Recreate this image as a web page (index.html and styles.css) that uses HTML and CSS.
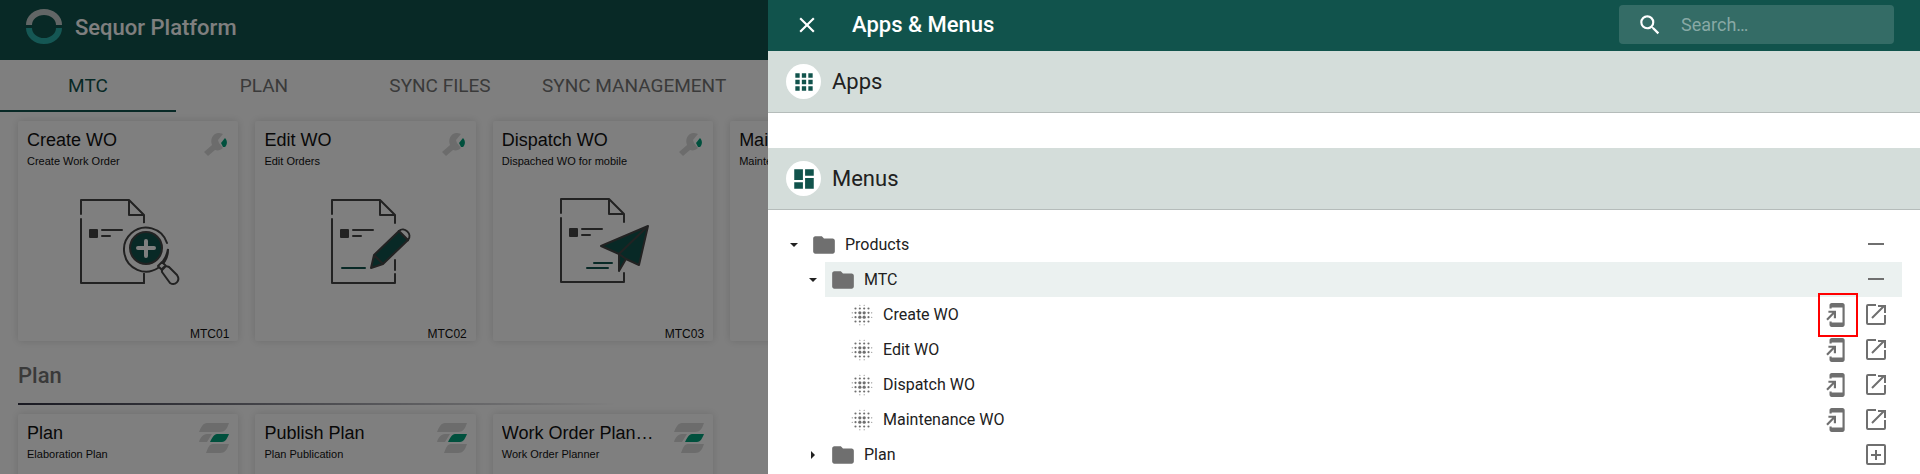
FILE: index.html
```html
<!DOCTYPE html>
<html lang="en">
<head>
    <meta charset="UTF-8">
    <meta name="viewport" content="width=device-width, initial-scale=1.0">
    <title>Sequor Platform</title>
    <link rel="stylesheet" href="styles.css">
</head>
<body>
    <!-- Shared icons -->
    <svg class="sprite" aria-hidden="true">
        <symbol id="folder" viewBox="0 0 24 24"><path d="M10 4H4c-1.100 0-2 .9-2 2v12c0 1.100.9 2 2 2h16c1.100 0 2-.9 2-2V8c0-1.100-.9-2-2-2h-8z"/></symbol>
        <symbol id="blur" viewBox="0 0 24 24">
            <circle cx="10" cy="10" r="1.500"/><circle cx="14" cy="10" r="1.500"/><circle cx="10" cy="14" r="1.500"/><circle cx="14" cy="14" r="1.500"/>
            <circle cx="6" cy="6" r="1"/><circle cx="10" cy="6" r="1"/><circle cx="14" cy="6" r="1"/><circle cx="18" cy="6" r="1"/>
            <circle cx="6" cy="18" r="1"/><circle cx="10" cy="18" r="1"/><circle cx="14" cy="18" r="1"/><circle cx="18" cy="18" r="1"/>
            <circle cx="6" cy="10" r="1"/><circle cx="6" cy="14" r="1"/><circle cx="18" cy="10" r="1"/><circle cx="18" cy="14" r="1"/>
            <circle cx="3" cy="10" r=".5"/><circle cx="3" cy="14" r=".5"/><circle cx="21" cy="10" r=".5"/><circle cx="21" cy="14" r=".5"/>
            <circle cx="10" cy="3" r=".5"/><circle cx="14" cy="3" r=".5"/><circle cx="10" cy="21" r=".5"/><circle cx="14" cy="21" r=".5"/>
        </symbol>
        <symbol id="to-home" viewBox="0 0 24 24"><path d="M18 1H8c-1.100 0-2 .9-2 2v3h2V5h10v14H8v-1H6v3c0 1.100.9 2 2 2h10c1.100 0 2-.9 2-2V3c0-1.100-.9-2-2-2zM10 15h2V8H5v2h3.590L3 15.590 4.410 17 10 11.410z"/></symbol>
        <symbol id="open" viewBox="0 1 26 26"><path fill="none" stroke="currentColor" stroke-width="2" d="M13 4H5a1 1 0 0 0-1 1v17a1 1 0 0 0 1 1h16a1 1 0 0 0 1-1v-8M15 5h7v7M9 17 21 5"/></symbol>
        <symbol id="minus" viewBox="0 1 26 26"><path d="M5 12h16v2H5z"/></symbol>
        <symbol id="plus-box" viewBox="0 1 26 26"><path fill="none" stroke="currentColor" stroke-width="2" d="M5 4h16a1 1 0 0 1 1 1v17a1 1 0 0 1-1 1H5a1 1 0 0 1-1-1V5a1 1 0 0 1 1-1zM8 14h10M13 9v10"/></symbol>
        <symbol id="wrench" viewBox="0 0 30 30">
            <path fill="#d9d9d9" d="M5 22 13 15C11 10 13 4 19 3c2 0 3 0 5 1l-5 6 1 3 4 5c-2 2-5 3-8 2l-7 6z"/>
            <path fill="#00a07a" d="M22 13l4-5c3 3 2 7 0 9h-2z"/>
        </symbol>
        <symbol id="planner" viewBox="0 0 30 30">
            <path fill="#d9d9d9" d="M8 0h22c-2 6-4 9-9 9H0c2-5 4-9 8-9zM8 11h5l-5 8H0c1-4 4-8 8-8zM14 21h16c-2 6-4 9-9 9H7c2-5 3-9 7-9z"/>
            <path fill="#00a07a" d="M18 11h12c-2 5-4 8-7 8H11c2-4 4-8 7-8z"/>
        </symbol>
        <symbol id="document" viewBox="0 0 66 88" overflow="visible">
            <path fill="none" stroke="#444" stroke-width="2" stroke-linejoin="round" stroke-linecap="round" d="M1 15V1h48l15 15v8M49 1v15h15M1 20v64h63v-9"/>
            <path fill="#444" d="M10 30h7q1 0 1 1v7q0 1-1 1h-7q-1 0-1-1v-7q0-1 1-1z"/>
            <path fill="none" stroke="#444" stroke-width="2" stroke-linecap="round" d="M22 31h20M22 37h8"/>
        </symbol>
    </svg>

    <div class="page">
        <header class="topbar">
            <svg class="logo" viewBox="0 0 36 36">
                <path fill="none" stroke="#c5cdcc" stroke-width="6" d="M3 16a15 13 0 0 1 30 0"/>
                <path fill="none" stroke="#2aaea9" stroke-width="6" d="M3 19a15 13 0 0 0 30 0"/>
            </svg>
            <h1>Sequor Platform</h1>
        </header>

        <nav class="tabs">
            <button class="tab active">MTC</button>
            <button class="tab">PLAN</button>
            <button class="tab">SYNC FILES</button>
            <button class="tab">SYNC MANAGEMENT</button>
            <button class="tab">MONITORING</button>
        </nav>

        <div class="cards">
            <a class="card" href="#mtc01">
                <div class="card-head">
                    <h3>Create WO</h3>
                    <svg class="card-icon"><use href="#wrench"/></svg>
                </div>
                <p>Create Work Order</p>
                <svg class="picture" viewBox="0 0 120 100">
                    <use href="#document" x="12" y="7" width="66" height="88"/>
                    <circle cx="78" cy="56" r="25" fill="#fff"/>
                    <path fill="none" stroke="#444" stroke-width="2" stroke-linecap="round" d="M76 82v9"/>
                    <path fill="none" stroke="#444" stroke-width="2" stroke-linecap="round" d="M99 51a22 22 0 1 0 1 6q-1 7-5 12"/>
                    <circle cx="78" cy="56" r="16" fill="#11534c" stroke="#444" stroke-width="2"/>
                    <path stroke="#fff" stroke-width="4" stroke-linecap="round" d="M78 49v15M70 56h16"/>
                    <path fill="#fff" stroke="#444" stroke-width="2" stroke-linejoin="round" d="M90 74l4-4 4 4-4 4zM94 80c-1-4 3-7 7-5l8 8c4 6-2 11-7 8z"/>
                </svg>
                <span class="code">MTC01</span>
            </a>
            <a class="card" href="#mtc02">
                <div class="card-head">
                    <h3>Edit WO</h3>
                    <svg class="card-icon"><use href="#wrench"/></svg>
                </div>
                <p>Edit Orders</p>
                <svg class="picture" viewBox="0 0 120 100">
                    <use href="#document" x="25" y="7" width="66" height="88"/>
                    <path stroke="#11534c" stroke-width="2" stroke-linecap="round" d="M36 76h23"/>
                    <path stroke="#fff" stroke-width="5" d="M89 40v26"/>
                    <path stroke="#444" stroke-width="2" stroke-linecap="round" d="M89 68v10"/>
                    <path fill="#11534c" stroke="#444" stroke-width="2" stroke-linejoin="round" d="M65 76l3-13 25-24 9 9-25 24zM68 63l9 9"/>
                    <path fill="#fff" stroke="#444" stroke-width="2" d="M93 39c5-5 14 3 9 9z"/>
                </svg>
                <span class="code">MTC02</span>
            </a>
            <a class="card" href="#mtc03">
                <div class="card-head">
                    <h3>Dispatch WO</h3>
                    <svg class="card-icon"><use href="#wrench"/></svg>
                </div>
                <p>Dispached WO for mobile</p>
                <svg class="picture" viewBox="0 0 120 100">
                    <use href="#document" x="17" y="6" width="66" height="88"/>
                    <path stroke="#11534c" stroke-width="2" stroke-linecap="round" d="M51 71h18M44 76h21"/>
                    <path fill="#11534c" stroke="#444" stroke-width="2" stroke-linejoin="round" d="M58 54l47-20-9 39-13-6-7 12V62zM76 62l29-28M76 62l7 5"/>
                </svg>
                <span class="code">MTC03</span>
            </a>
            <a class="card" href="#mtc04">
                <div class="card-head">
                    <h3>Maintenance WO</h3>
                    <svg class="card-icon"><use href="#wrench"/></svg>
                </div>
                <p>Maintenance Orders</p>
                <span class="code">MTC04</span>
            </a>
        </div>

        <h2 class="section-title">Plan</h2>

        <div class="cards">
            <a class="card" href="#plan01">
                <div class="card-head">
                    <h3>Plan</h3>
                    <svg class="card-icon"><use href="#planner"/></svg>
                </div>
                <p>Elaboration Plan</p>
            </a>
            <a class="card" href="#plan02">
                <div class="card-head">
                    <h3>Publish Plan</h3>
                    <svg class="card-icon"><use href="#planner"/></svg>
                </div>
                <p>Plan Publication</p>
            </a>
            <a class="card" href="#plan03">
                <div class="card-head">
                    <h3>Work Order Planner</h3>
                    <svg class="card-icon"><use href="#planner"/></svg>
                </div>
                <p>Work Order Planner</p>
            </a>
        </div>
    </div>

    <div class="backdrop"></div>

    <aside class="drawer">
        <div class="drawer-header">
            <button class="icon-button close" aria-label="Close">
                <svg class="icon" viewBox="0 0 24 24"><path d="M19 6.410 17.590 5 12 10.590 6.410 5 5 6.410 10.590 12 5 17.590 6.410 19 12 13.410 17.590 19 19 17.590 13.410 12z"/></svg>
            </button>
            <h2>Apps &amp; Menus</h2>
            <label class="search">
                <svg class="icon" viewBox="0 0 24 24"><path d="M15.500 14h-.79l-.28-.27A6.470 6.470 0 0 0 16 9.500 6.500 6.500 0 1 0 9.500 16c1.610 0 3.090-.59 4.230-1.570l.27.28v.79l5 4.990L20.490 19zm-6 0C7.010 14 5 11.990 5 9.500S7.010 5 9.500 5 14 7.010 14 9.500 11.990 14 9.500 14z"/></svg>
                <input type="text" placeholder="Search…" aria-label="Search">
            </label>
        </div>

        <div class="band">
            <span class="band-icon">
                <svg class="icon" viewBox="0 0 24 24"><path d="M4 8h4V4H4zm6 12h4v-4h-4zm-6 0h4v-4H4zm0-6h4v-4H4zm6 0h4v-4h-4zm6-10v4h4V4zm-6 4h4V4h-4zm6 6h4v-4h-4zm0 6h4v-4h-4z"/></svg>
            </span>
            <h3>Apps</h3>
        </div>
        <div class="apps"></div>
        <div class="band">
            <span class="band-icon">
                <svg class="icon" viewBox="0 0 24 24"><path d="M3 13h8V3H3zm0 8h8v-6H3zm10 0h8V11h-8zm0-18v6h8V3z"/></svg>
            </span>
            <h3>Menus</h3>
        </div>

        <ul class="tree">
            <li>
                <div class="row">
                    <button class="caret open" aria-label="Collapse Products"></button>
                    <div class="node">
                        <svg class="icon"><use href="#folder"/></svg>
                        <span class="label">Products</span>
                        <button class="icon-button" aria-label="Collapse"><svg class="icon"><use href="#minus"/></svg></button>
                    </div>
                </div>
                <ul>
                    <li>
                        <div class="row">
                            <button class="caret open" aria-label="Collapse MTC"></button>
                            <div class="node selected">
                                <svg class="icon"><use href="#folder"/></svg>
                                <span class="label">MTC</span>
                                <button class="icon-button" aria-label="Collapse"><svg class="icon"><use href="#minus"/></svg></button>
                            </div>
                        </div>
                        <ul>
                            <li class="row">
                                <div class="node">
                                    <svg class="icon"><use href="#blur"/></svg>
                                    <span class="label">Create WO</span>
                                    <button class="icon-button home marked" aria-label="Add to home"><svg class="icon"><use href="#to-home"/></svg></button>
                                    <button class="icon-button" aria-label="Open in new tab"><svg class="icon"><use href="#open"/></svg></button>
                                </div>
                            </li>
                            <li class="row">
                                <div class="node">
                                    <svg class="icon"><use href="#blur"/></svg>
                                    <span class="label">Edit WO</span>
                                    <button class="icon-button home" aria-label="Add to home"><svg class="icon"><use href="#to-home"/></svg></button>
                                    <button class="icon-button" aria-label="Open in new tab"><svg class="icon"><use href="#open"/></svg></button>
                                </div>
                            </li>
                            <li class="row">
                                <div class="node">
                                    <svg class="icon"><use href="#blur"/></svg>
                                    <span class="label">Dispatch WO</span>
                                    <button class="icon-button home" aria-label="Add to home"><svg class="icon"><use href="#to-home"/></svg></button>
                                    <button class="icon-button" aria-label="Open in new tab"><svg class="icon"><use href="#open"/></svg></button>
                                </div>
                            </li>
                            <li class="row">
                                <div class="node">
                                    <svg class="icon"><use href="#blur"/></svg>
                                    <span class="label">Maintenance WO</span>
                                    <button class="icon-button home" aria-label="Add to home"><svg class="icon"><use href="#to-home"/></svg></button>
                                    <button class="icon-button" aria-label="Open in new tab"><svg class="icon"><use href="#open"/></svg></button>
                                </div>
                            </li>
                        </ul>
                    </li>
                    <li>
                        <div class="row">
                            <button class="caret" aria-label="Expand Plan"></button>
                            <div class="node">
                                <svg class="icon"><use href="#folder"/></svg>
                                <span class="label">Plan</span>
                                <button class="icon-button" aria-label="Expand"><svg class="icon"><use href="#plus-box"/></svg></button>
                            </div>
                        </div>
                    </li>
                </ul>
            </li>
        </ul>
    </aside>
</body>
</html>
```

FILE: styles.css
```css
* {
    margin: 0;
    padding: 0;
    box-sizing: border-box;
}

body {
    background: #fff;
    color: #212121;
    font-family: Roboto, sans-serif;
}

button {
    border: none;
    background: none;
    font-family: inherit;
    cursor: pointer;
}

ul {
    list-style: none;
}

.sprite {
    position: absolute;
    width: 0;
    height: 0;
}

.icon {
    display: block;
    flex-shrink: 0;
    width: 26px;
    height: 26px;
    fill: currentColor;
}

/* Page behind the drawer */
.page {
    height: 100vh;
    overflow: hidden;
}

.topbar {
    display: flex;
    align-items: center;
    gap: 13px;
    height: 60px;
    padding: 0 26px 6px;
    background: #11534c;
    color: #fff;
}

.topbar h1 {
    font-size: 22px;
    font-weight: 500;
}

.logo {
    width: 36px;
    height: 36px;
}

.tabs {
    display: flex;
    height: 52px;
    overflow: hidden;
}

.tab {
    flex-shrink: 0;
    min-width: 176px;
    padding: 0 14px;
    border-bottom: 2px solid transparent;
    color: #757575;
    font-size: 19px;
    font-weight: 400;
}

.tab.active {
    border-color: #11534c;
    color: #11534c;
}

.cards {
    display: grid;
    grid-template-columns: repeat(8, 1fr);
    gap: 17px;
    padding: 9px 20px 0 18px;
}

.card {
    display: flex;
    flex-direction: column;
    min-width: 0;
    aspect-ratio: 1;
    padding: 9px;
    border-radius: 2px;
    box-shadow: 0 0 8px rgba(0, 0, 0, 0.15);
    color: #111;
    font-family: "Liberation Sans", Arial, sans-serif;
    text-decoration: none;
}

.card-head {
    display: flex;
    gap: 14px;
    height: 24px;
}

.card h3 {
    flex: 1;
    overflow: hidden;
    font-size: 18px;
    font-weight: 400;
    line-height: 20px;
    white-space: nowrap;
    text-overflow: ellipsis;
}

.card-icon {
    flex-shrink: 0;
    width: 30px;
    height: 30px;
}

.card p {
    font-size: 11px;
    line-height: 14px;
}

.picture {
    align-self: center;
    width: 120px;
    height: 100px;
    margin-top: 24px;
}

.code {
    margin-top: auto;
    margin-bottom: -9px;
    font-size: 12px;
    line-height: 13px;
    text-align: right;
}

.section-title {
    margin-top: 22px;
    margin-left: 18px;
    padding-bottom: 14px;
    border-bottom: 2px solid;
    border-image: linear-gradient(to right, #334, transparent 600px) 1;
    color: #757575;
    font-size: 22px;
    font-weight: 500;
    line-height: 26px;
}

.backdrop {
    position: fixed;
    inset: 0;
    background: rgba(0, 0, 0, 0.5);
}

/* Drawer */
.drawer {
    position: fixed;
    top: 0;
    right: 0;
    bottom: 0;
    width: 60%;
    overflow: hidden;
    background: #fff;
}

.drawer-header {
    display: flex;
    align-items: center;
    height: 51px;
    padding: 0 26px 2px;
    background: #11534c;
    color: #fff;
}

.drawer-header h2 {
    margin-left: 32px;
    font-size: 22px;
    font-weight: 500;
}

.search {
    display: flex;
    align-items: center;
    gap: 18px;
    width: 275px;
    height: 39px;
    margin-left: auto;
    padding: 0 18px;
    border-radius: 4px;
    background: rgba(255, 255, 255, 0.15);
}

.search input {
    flex: 1;
    min-width: 0;
    border: none;
    outline: none;
    background: none;
    color: #fff;
    font-family: inherit;
    font-size: 18px;
}

.search input::placeholder {
    color: #88a9a5;
    opacity: 1;
}

.band {
    display: flex;
    align-items: center;
    gap: 11px;
    height: 62px;
    padding: 0 18px;
    border-bottom: 1px solid #b5bcba;
    background: #d4ddda;
}

.band h3 {
    font-size: 22px;
    font-weight: 400;
}

.band-icon {
    display: flex;
    align-items: center;
    justify-content: center;
    width: 35px;
    height: 35px;
    border-radius: 50%;
    background: #fff;
    color: #11534c;
}

.apps {
    height: 35px;
}

.tree {
    padding: 17px 18px 0 17px;
}

.tree ul {
    padding-left: 19px;
}

.row {
    display: flex;
    height: 35px;
}

.caret {
    display: flex;
    align-items: center;
    justify-content: center;
    width: 18px;
}

.caret::before {
    content: "";
    border: 4px solid transparent;
    border-right-width: 0;
    border-left-color: #212121;
}

.caret.open::before {
    border: 4px solid transparent;
    border-bottom-width: 0;
    border-top-color: #212121;
}

.node {
    flex: 1;
    display: flex;
    align-items: center;
    margin-left: 3px;
    padding: 0 8px 0 5px;
    color: #6f6f6f;
}

.node.selected {
    background: #ebf1f0;
}

.tree ul ul .node {
    margin-left: 21px;
}

.label {
    flex: 1;
    margin-left: 8px;
    color: #212121;
    font-size: 16px;
}

.icon-button {
    display: flex;
    align-items: center;
    justify-content: center;
    width: 36px;
    height: 35px;
    color: inherit;
}

.home {
    width: 40px;
    padding-right: 5px;
}

.close {
    width: 26px;
}

.marked {
    height: 44px;
    border: 2px solid #f00;
}
```
